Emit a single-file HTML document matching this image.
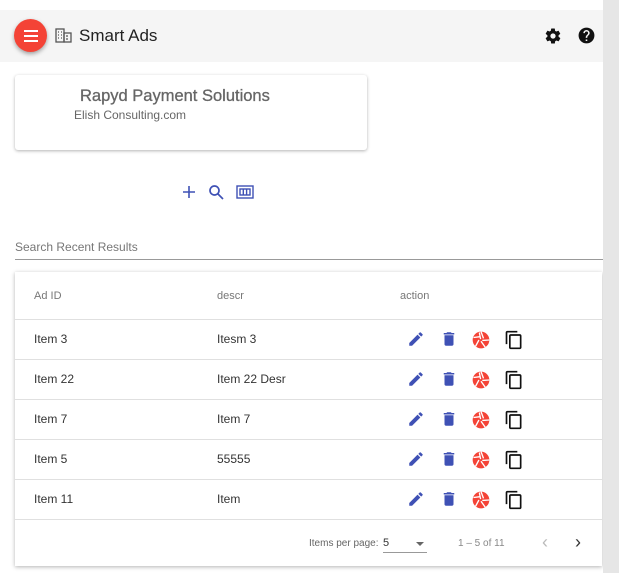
<!DOCTYPE html>
<html><head><style>
body{margin:0;width:619px;height:573px;overflow:hidden;background:#fff;font-family:"Liberation Sans",Arial,sans-serif;position:relative}
.sb{position:absolute;left:603px;top:0;width:16px;height:573px;background:#e6e6e6}
.sbt{position:absolute;left:609px;top:340px;width:4px;height:20px;border-left:1px solid #999;border-right:1px solid #999}
.hdr{position:absolute;left:0;top:10px;width:603px;height:52px;background:#f5f5f5}
.fab{position:absolute;left:14px;top:19px;width:33px;height:33px;border-radius:50%;background:#f44336;box-shadow:0 2px 4px rgba(0,0,0,.35)}
.fab i{position:absolute;left:10px;width:14px;height:2px;background:#fff}
.title{position:absolute;left:79px;top:26px;font-size:17px;color:#222}
.card{position:absolute;left:15px;top:75px;width:352px;height:75px;background:#fff;border-radius:3px;box-shadow:0 1px 3px rgba(0,0,0,.3)}
.t1{position:absolute;left:80px;top:87px;font-size:16.5px;color:#666;-webkit-text-stroke:0.3px #666}
.t2{position:absolute;left:74px;top:108px;font-size:12px;color:#666}
.search{position:absolute;left:15px;top:240px;font-size:12px;color:#777}
.line{position:absolute;left:15px;top:259px;width:588px;height:1px;background:#999}
.tbl{position:absolute;left:15px;top:272px;width:587px;height:294px;background:#fff;box-shadow:0 1px 4px rgba(0,0,0,.3)}
.row{position:absolute;left:0;width:587px;height:40px;border-top:1px solid #e0e0e0;font-size:12px;color:#333}
.row span{position:absolute;top:12px}
.th{font-size:11px;color:#777;position:absolute}
.ic{position:absolute;top:10px}
</style></head><body>
<div class="hdr"></div>
<div class="fab"><i style="top:11px"></i><i style="top:16px"></i><i style="top:21px"></i></div>
<svg style="position:absolute;left:55px;top:28px" width="17" height="15" viewBox="0 0 17 15" fill="none" stroke="#555" stroke-width="1.3"><rect x="1" y="1" width="8" height="13"/><rect x="9" y="5" width="7" height="9"/><path d="M3 4h1M6 4h1M3 7h1M6 7h1M3 10h1M6 10h1M11 8h2M11 11h2"/></svg>
<div class="title">Smart Ads</div>
<svg style="position:absolute;left:544px;top:27px" width="18" height="18" viewBox="0 0 24 24"><path fill="#111" d="M19.4 13c.04-.3.06-.6.06-1s-.02-.7-.07-1l2.1-1.6c.2-.15.24-.42.12-.64l-2-3.460c-.12-.22-.39-.3-.61-.22l-2.49 1c-.52-.4-1.080-.73-1.69-.98l-.38-2.65A.49.49 0 0014 2h-4c-.25 0-.46.18-.49.42l-.38 2.65c-.61.25-1.17.59-1.69.98l-2.49-1c-.23-.09-.49 0-.61.22l-2 3.46c-.13.22-.07.49.12.64L4.57 11c-.04.32-.07.65-.07 1s.02.68.06 1l-2.1 1.65c-.2.15-.24.42-.12.64l2 3.46c.12.22.39.3.61.22l2.49-1c.52.4 1.08.73 1.69.98l.38 2.65c.03.24.24.42.49.42h4c.25 0 .46-.18.49-.42l.38-2.65c.61-.25 1.17-.59 1.690-.98l2.49 1c.23.09.49 0 .61-.22l2-3.46c.12-.22.07-.49-.12-.64L19.4 13zM12 15.5A3.5 3.5 0 1112 8.5a3.5 3.5 0 010 7z"/></svg>
<svg style="position:absolute;left:577px;top:26px" width="19" height="19" viewBox="0 0 24 24"><path fill="#111" d="M12 2a10 10 0 100 20 10 10 0 000-20zm1 17h-2v-2h2v2zm2.07-7.75l-.9.92C13.45 12.9 13 13.5 13 15h-2v-.5c0-1.1.45-2.1 1.17-2.83l1.24-1.26A2 2 0 0014 9a2 2 0 00-4 0H8a4 4 0 018 0c0 .88-.36 1.68-.93 2.25z"/></svg>
<div class="card"></div>
<div class="t1">Rapyd Payment Solutions</div>
<div class="t2">Elish Consulting.com</div>
<svg style="position:absolute;left:182px;top:185px" width="14" height="14" viewBox="0 0 14 14"><path d="M7 1v12M1 7h12" stroke="#3f51b5" stroke-width="1.6"/></svg>
<svg style="position:absolute;left:208px;top:184px" width="16" height="16" viewBox="0 0 16 16" fill="none" stroke="#3f51b5" stroke-width="1.7"><circle cx="6.5" cy="6.5" r="4.5"/><path d="M10 10l5 5"/></svg>
<svg style="position:absolute;left:236px;top:185px" width="18" height="14" viewBox="0 0 18 14" fill="none" stroke="#3f51b5" stroke-width="1.4"><rect x="1" y="1" width="16" height="12"/><rect x="4" y="4" width="10" height="6"/><path d="M7.3 4v6M10.6 4v6"/></svg>
<div class="search">Search Recent Results</div>
<div class="line"></div>
<div class="tbl">
<div class="th" style="left:19px;top:18px">Ad ID</div>
<div class="th" style="left:202px;top:18px">descr</div>
<div class="th" style="left:385px;top:18px">action</div>
</div>
<div class="sb"><div class="sbt"></div></div>
<script>
var d=[["Item 3","Itesm 3"],["Item 22","Item 22 Desr"],["Item 7","Item 7"],["Item 5","55555"],["Item 11","Item"]];
var t=document.querySelector('.tbl'),h='';
var ic='<svg class="ic" style="left:392px" width="18" height="18" viewBox="0 0 24 24"><path fill="#3f51b5" d="M3 17.25V21h3.75L17.81 9.94l-3.75-3.75L3 17.25zM20.71 7.04a1 1 0 000-1.41l-2.34-2.34a1 1 0 00-1.41 0l-1.83 1.83 3.75 3.75 1.83-1.83z"/></svg>'+
'<svg class="ic" style="left:425px" width="18" height="18" viewBox="0 0 24 24"><path fill="#3f51b5" d="M6 19c0 1.1.9 2 2 2h8c1.1 0 2-.9 2-2V7H6v12zM19 4h-3.5l-1-1h-5l-1 1H5v2h14V4z"/></svg>'+
'<svg class="ic" style="left:456px" width="20" height="20" viewBox="0 0 24 24"><circle cx="12" cy="12" r="10" fill="#f44336"/><path d="M12 2l3 8M22 12l-8.5 0.5M17 20.5l-5-7M5.5 19.5l4-7.5M3 9l8-1M10 3l1.5 8" stroke="#fff" stroke-width="1.6"/></svg>'+
'<svg class="ic" style="left:489px" width="20" height="20" viewBox="0 0 24 24"><path fill="#111" d="M16 1H4c-1.1 0-2 .9-2 2v14h2V3h12V1zm3 4H8c-1.1 0-2 .9-2 2v14c0 1.1.9 2 2 2h11c1.1 0 2-.9 2-2V7c0-1.1-.9-2-2-2zm0 16H8V7h11v14z"/></svg>';
d.forEach(function(r,i){h+='<div class="row" style="top:'+(47+i*40)+'px"><span style="left:19px">'+r[0]+'</span><span style="left:202px">'+r[1]+'</span>'+ic+'</div>';});
h+='<div class="row" style="top:247px;height:47px;font-size:10px;color:#666"><span style="left:294px;top:18px">Items per page:</span><span style="left:368px;top:17px;font-size:11px;color:#333">5</span><div style="position:absolute;left:368px;top:32px;width:44px;height:1px;background:#999"></div><div style="position:absolute;left:401px;top:22px;border:4px solid transparent;border-top:4px solid #666"></div><span style="left:443px;top:18px;color:#888">1 – 5 of 11</span><span style="left:527px;top:12px;font-size:18px;color:#bbb">‹</span><span style="left:560px;top:12px;font-size:18px;color:#333">›</span></div>';
t.innerHTML+=h;
</script>
</body></html>
